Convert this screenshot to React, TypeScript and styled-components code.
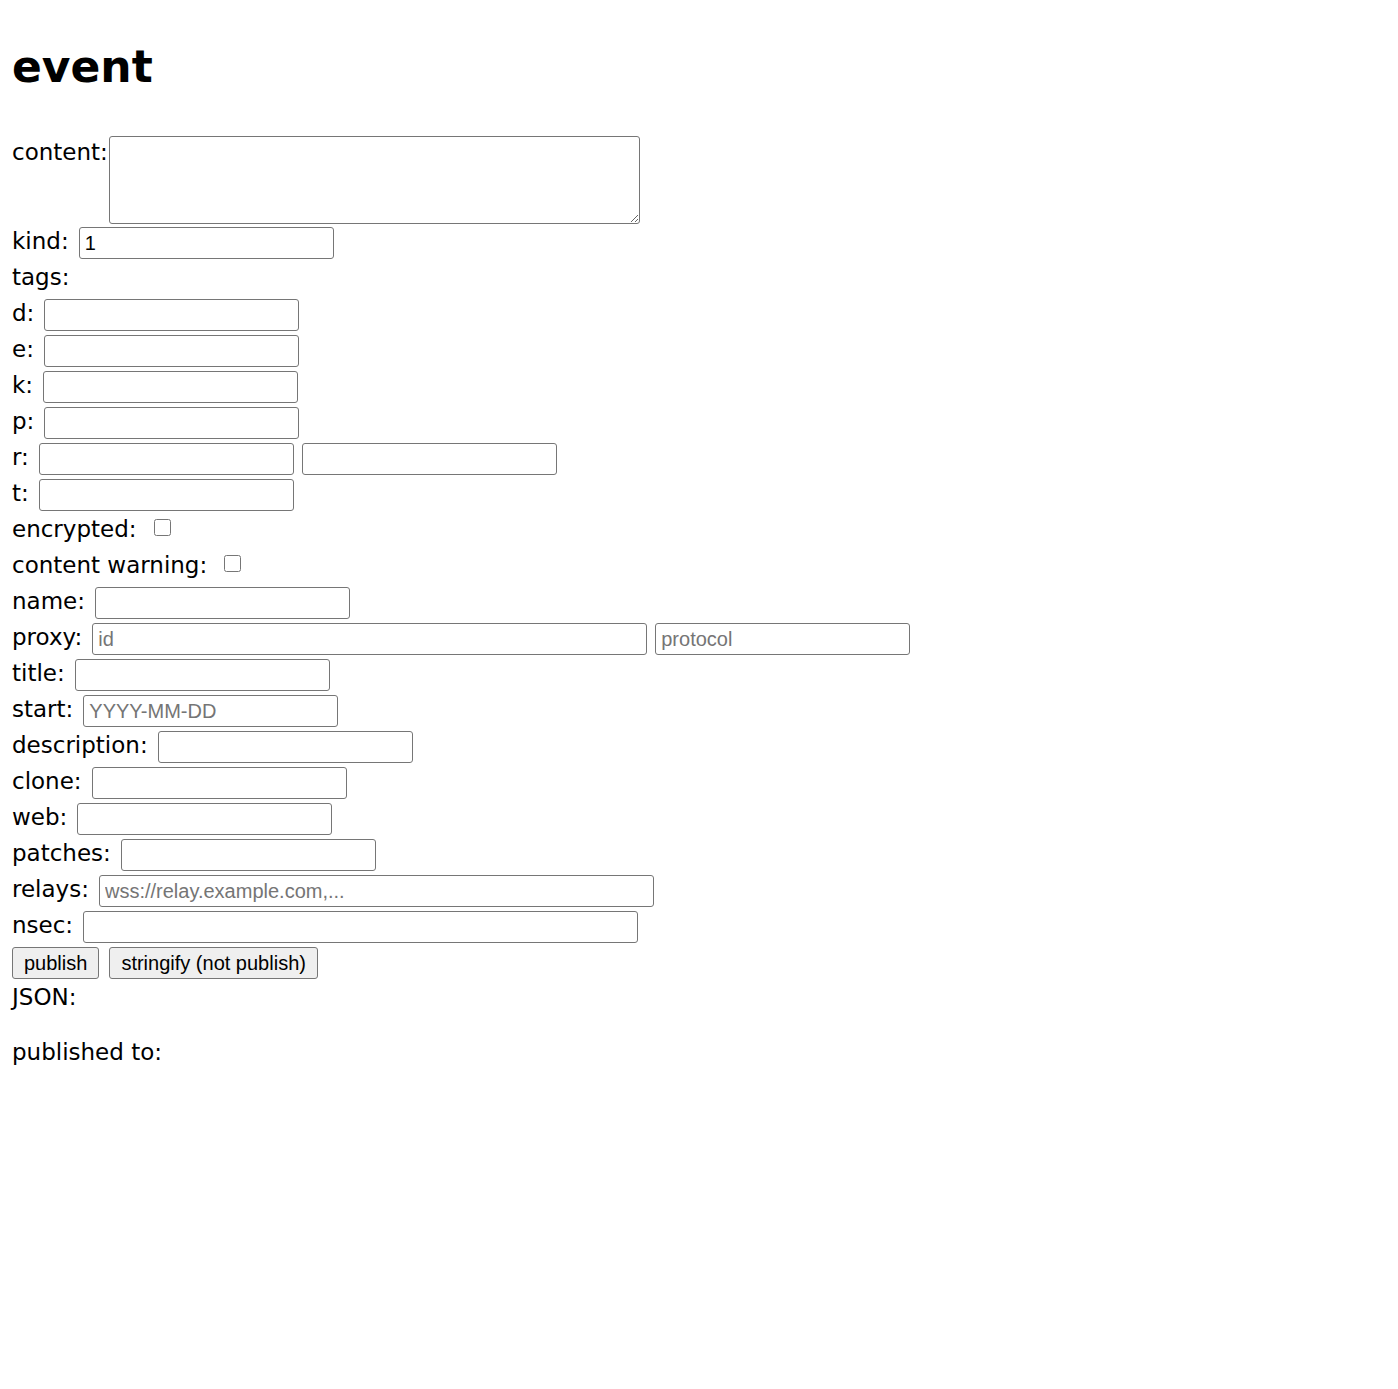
import React from 'react';
import styled, { createGlobalStyle } from 'styled-components';

const GlobalStyle = createGlobalStyle`
  html, body {
    margin: 0;
    padding: 0;
    background: #ffffff;
  }
  body {
    font-family: "DejaVu Sans", "Noto Sans", sans-serif;
    font-size: 23px;
    color: #000000;
  }
`;

const Page = styled.div`
  padding: 0 12px 40px 12px;
`;

const Title = styled.h1`
  margin: 0;
  padding: 32px 0 32px 0;
  font-family: "DejaVu Sans", sans-serif;
  font-weight: bold;
  font-size: 44px;
  line-height: 70px;
`;

const Row = styled.div<{ $gap?: number; $tall?: boolean }>`
  display: flex;
  align-items: ${props => (props.$tall ? 'flex-start' : 'center')};
  gap: ${props => props.$gap ?? 10}px;
  height: ${props => (props.$tall ? 91 : 36)}px;
  white-space: nowrap;
`;

const Label = styled.span<{ $top?: boolean }>`
  line-height: 36px;
  margin-bottom: ${props => (props.$top ? 0 : 5)}px;
`;

const TextArea = styled.textarea`
  box-sizing: border-box;
  width: 531px;
  height: 88px;
  margin: 2px 0 0 0;
  border: 1px solid #767676;
  border-radius: 3px;
  font-family: "Liberation Mono", monospace;
  font-size: 20px;
`;

const TextInput = styled.input<{ $wide?: boolean }>`
  box-sizing: border-box;
  width: ${props => (props.$wide ? 555 : 255)}px;
  height: 32px;
  margin: 0;
  padding: 0 5px;
  border: 1px solid #767676;
  border-radius: 3px;
  font-family: "Liberation Sans", Arial, sans-serif;
  font-size: 20px;
  color: #000000;
  background: #ffffff;

  &::placeholder {
    color: #757575;
  }
`;

const Pair = styled.div`
  display: flex;
  gap: 8px;
`;

const Check = styled.input`
  width: 17px;
  height: 17px;
  margin: 0 0 7px 7px;
`;

const Button = styled.button`
  box-sizing: border-box;
  height: 32px;
  padding: 0 11px;
  margin: 0;
  border: 1px solid #767676;
  border-radius: 3px;
  background: #efefef;
  font-family: "Liberation Sans", Arial, sans-serif;
  font-size: 20px;
  color: #000000;
`;

const Spacer = styled.div`
  height: 19px;
`;

const tagKeys = ['d', 'e', 'k', 'p'];

const fields: { name: string; placeholder?: string; wide?: boolean }[] = [
  { name: 'title' },
  { name: 'start', placeholder: 'YYYY-MM-DD' },
  { name: 'description' },
  { name: 'clone' },
  { name: 'web' },
  { name: 'patches' },
  { name: 'relays', placeholder: 'wss://relay.example.com,...', wide: true },
  { name: 'nsec', wide: true },
];

export default function App() {
  return (
    <>
      <GlobalStyle />
      <Page>
        <Title>event</Title>

        <Row $tall $gap={1}>
          <Label $top>content:</Label>
          <TextArea />
        </Row>
        <Row>
          <Label>kind:</Label>
          <TextInput type="text" defaultValue="1" />
        </Row>
        <Row>
          <Label>tags:</Label>
        </Row>
        {tagKeys.map(k => (
          <Row key={k}>
            <Label>{k}:</Label>
            <TextInput type="text" />
          </Row>
        ))}
        <Row>
          <Label>r:</Label>
          <Pair>
            <TextInput type="text" />
            <TextInput type="text" />
          </Pair>
        </Row>
        <Row>
          <Label>t:</Label>
          <TextInput type="text" />
        </Row>
        <Row>
          <Label>encrypted:</Label>
          <Check type="checkbox" />
        </Row>
        <Row>
          <Label>content warning:</Label>
          <Check type="checkbox" />
        </Row>
        <Row>
          <Label>name:</Label>
          <TextInput type="text" />
        </Row>
        <Row>
          <Label>proxy:</Label>
          <Pair>
            <TextInput type="text" $wide placeholder="id" />
            <TextInput type="text" placeholder="protocol" />
          </Pair>
        </Row>
        {fields.map(f => (
          <Row key={f.name}>
            <Label>{f.name}:</Label>
            <TextInput type="text" $wide={f.wide} placeholder={f.placeholder} />
          </Row>
        ))}
        <Row $gap={10}>
          <Button>publish</Button>
          <Button>stringify (not publish)</Button>
        </Row>
        <Row>
          <Label>JSON:</Label>
        </Row>
        <Spacer />
        <Row>
          <Label>published to:</Label>
        </Row>
      </Page>
    </>
  );
}
